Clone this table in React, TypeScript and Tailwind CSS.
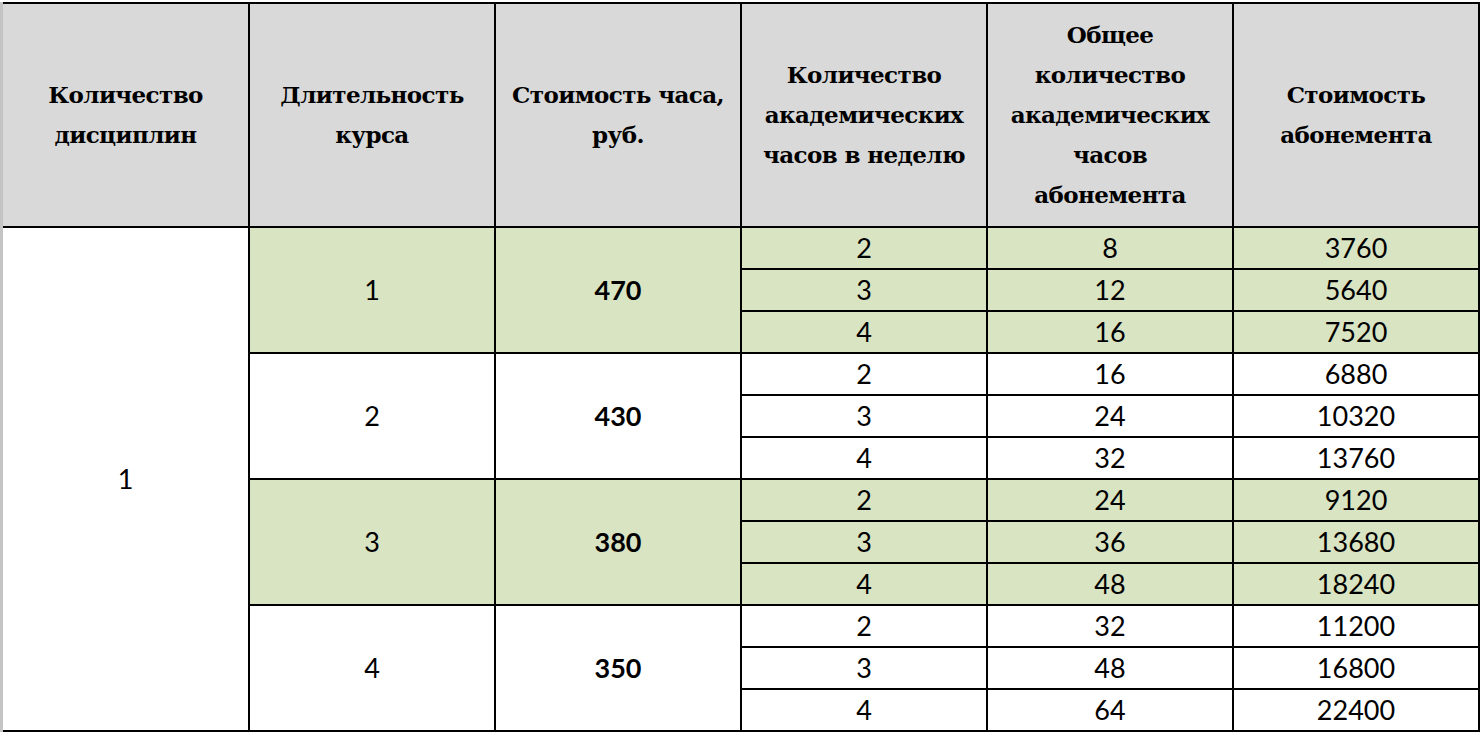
import React from "react";

type Group = { weeks: number; price: number; green: boolean; rows: [number, number, number][] };

const groups: Group[] = [
  { weeks: 1, price: 470, green: true, rows: [[2, 8, 3760], [3, 12, 5640], [4, 16, 7520]] },
  { weeks: 2, price: 430, green: false, rows: [[2, 16, 6880], [3, 24, 10320], [4, 32, 13760]] },
  { weeks: 3, price: 380, green: true, rows: [[2, 24, 9120], [3, 36, 13680], [4, 48, 18240]] },
  { weeks: 4, price: 350, green: false, rows: [[2, 32, 11200], [3, 48, 16800], [4, 64, 22400]] },
];

const headers = [
  ["Количество", "дисциплин"],
  ["Длительность", "курса"],
  ["Стоимость часа,", "руб."],
  ["Количество", "академических", "часов в неделю"],
  ["Общее", "количество", "академических", "часов", "абонемента"],
  ["Стоимость", "абонемента"],
];

const cell = "border-2 border-black text-center align-middle p-0";

export default function App() {
  return (
    <div className="min-h-screen bg-white pt-[2px]">
      <div className="w-[1479px] border-l-[3px] border-[#c4c4c4]">
        <table className="w-[1476px] table-fixed border-collapse font-['Lato','Open_Sans',sans-serif] text-[27px] text-black">
          <colgroup>
            <col className="w-[246px]" />
            <col className="w-[246px]" />
            <col className="w-[246px]" />
            <col className="w-[246px]" />
            <col className="w-[246px]" />
            <col className="w-[246px]" />
          </colgroup>
          <thead>
            <tr className="h-[224px] bg-[#d9d9d9]">
              {headers.map((lines, i) => (
                <th
                  key={i}
                  className={`${cell} ${i === 0 ? "border-l-0" : ""} font-['DejaVu_Serif',serif] text-[23px] font-bold leading-[40px] tracking-[-0.6px]`}
                >
                  {lines.map((l) => (
                    <div key={l} className="whitespace-nowrap">{l}</div>
                  ))}
                </th>
              ))}
            </tr>
          </thead>
          <tbody>
            {groups.map((g, gi) =>
              g.rows.map((r, ri) => (
                <tr key={`${gi}-${ri}`} className="h-[42px] leading-[38px]">
                  {gi === 0 && ri === 0 && (
                    <td rowSpan={12} className={`${cell} border-l-0 bg-white`}>
                      1
                    </td>
                  )}
                  {ri === 0 && (
                    <>
                      <td rowSpan={3} className={`${cell} ${g.green ? "bg-[#d9e4c2]" : "bg-white"}`}>
                        {g.weeks}
                      </td>
                      <td rowSpan={3} className={`${cell} font-bold ${g.green ? "bg-[#d9e4c2]" : "bg-white"}`}>
                        {g.price}
                      </td>
                    </>
                  )}
                  {r.map((v, vi) => (
                    <td key={vi} className={`${cell} ${g.green ? "bg-[#d9e4c2]" : "bg-white"}`}>
                      {v}
                    </td>
                  ))}
                </tr>
              ))
            )}
          </tbody>
        </table>
      </div>
    </div>
  );
}
